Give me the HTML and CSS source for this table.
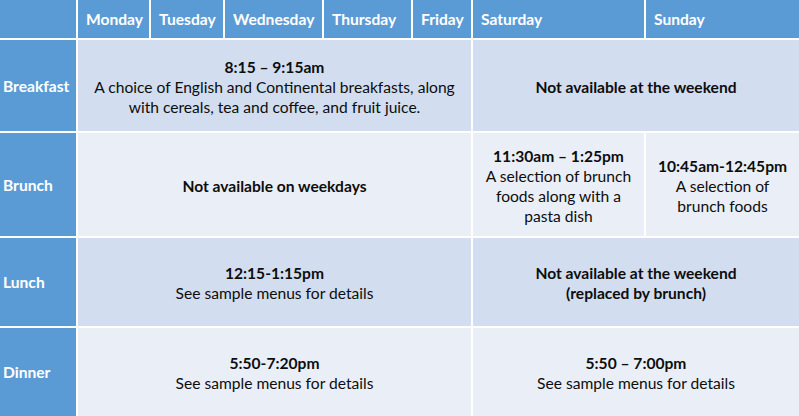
FILE: index.html
```html
<!DOCTYPE html>
<html lang="en">
<head>
<meta charset="utf-8">
<title>Meal times</title>
<link rel="stylesheet" href="styles.css">
</head>
<body>
<div class="timetable">
  <div class="head corner"></div>
  <div class="head">Monday</div>
  <div class="head">Tuesday</div>
  <div class="head">Wednesday</div>
  <div class="head">Thursday</div>
  <div class="head">Friday</div>
  <div class="head">Saturday</div>
  <div class="head">Sunday</div>

  <div class="label">Breakfast</div>
  <div class="cell odd weekdays"><p><b>8:15 – 9:15am</b><br>A choice of English and Continental breakfasts, along<br>with cereals, tea and coffee, and fruit juice.</p></div>
  <div class="cell odd weekend"><p><b>Not available at the weekend</b></p></div>

  <div class="label">Brunch</div>
  <div class="cell even weekdays"><p><b>Not available on weekdays</b></p></div>
  <div class="cell even"><p><b>11:30am – 1:25pm</b><br>A selection of brunch<br>foods along with a<br>pasta dish</p></div>
  <div class="cell even"><p><b>10:45am-12:45pm</b><br>A selection of<br>brunch foods</p></div>

  <div class="label">Lunch</div>
  <div class="cell odd weekdays"><p><b>12:15-1:15pm</b><br>See sample menus for details</p></div>
  <div class="cell odd weekend"><p><b>Not available at the weekend<br>(replaced by brunch)</b></p></div>

  <div class="label">Dinner</div>
  <div class="cell even weekdays"><p><b>5:50-7:20pm</b><br>See sample menus for details</p></div>
  <div class="cell even weekend"><p><b>5:50 – 7:00pm</b><br>See sample menus for details</p></div>
</div>
</body>
</html>
```
FILE: styles.css
```css
html, body {
  margin: 0;
  padding: 0;
  background: #ffffff;
}

body {
  font-family: Lato, "Open Sans", "Liberation Sans", sans-serif;
  font-size: 15.6px;
  color: #0d0d0d;
}

.timetable {
  display: grid;
  grid-template-columns: 76px 71px 72px 97px 87px 58px 171px 153px;
  grid-template-rows: 38px 91px 103px 88px 88px;
  gap: 2px;
  width: 799px;
  height: 416px;
  background: #ffffff;
}

.head {
  background: #5b9bd5;
  color: #ffffff;
  font-weight: 700;
  display: flex;
  align-items: center;
  padding-left: 8px;
}

.corner {
  padding: 0;
}

.label {
  background: #5b9bd5;
  color: #ffffff;
  font-weight: 700;
  display: flex;
  align-items: center;
  padding-left: 3px;
}

.cell {
  display: flex;
  align-items: center;
  justify-content: center;
  text-align: center;
  padding-top: 2px;
}

.cell p {
  margin: 0;
  line-height: 20px;
}

.odd {
  background: #d2deef;
}

.even {
  background: #eaeff7;
}

.weekdays {
  grid-column: 2 / span 5;
}

.weekend {
  grid-column: 7 / span 2;
}
```
